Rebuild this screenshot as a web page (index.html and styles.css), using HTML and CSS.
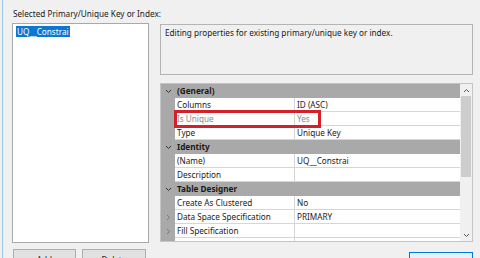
FILE: index.html
```html
<!DOCTYPE html>
<html>
<head>
<meta charset="utf-8">
<link rel="stylesheet" href="styles.css">
</head>
<body>
<div class="window">
  <div class="label">Selected Primary/Unique Key or Index:</div>
  <div class="main">
    <div class="left">
      <div class="list">
        <span class="sel">UQ__Constrai</span>
      </div>
      <div class="btns">
        <div class="btn add">Add</div>
        <div class="btn del">Delete</div>
      </div>
    </div>
    <div class="right">
      <div class="desc">Editing properties for existing primary/unique key or index.</div>
      <div class="grid">
        <div class="rows">
          <div class="row cat"><div class="mg"><svg width="7" height="5" viewBox="0 0 7 5"><path d="M1 1 L3.5 3.5 L6 1" fill="none" stroke="#333" stroke-width="1"/></svg></div><div class="cname">(General)</div></div>
          <div class="row prop"><div class="mg"></div><div class="name">Columns</div><div class="val">ID (ASC)</div></div>
          <div class="row prop ro"><div class="mg"></div><div class="name">Is Unique</div><div class="val">Yes</div></div>
          <div class="row prop"><div class="mg"></div><div class="name">Type</div><div class="val">Unique Key</div></div>
          <div class="row cat"><div class="mg"><svg width="7" height="5" viewBox="0 0 7 5"><path d="M1 1 L3.5 3.5 L6 1" fill="none" stroke="#333" stroke-width="1"/></svg></div><div class="cname">Identity</div></div>
          <div class="row prop"><div class="mg"></div><div class="name">(Name)</div><div class="val">UQ__Constrai</div></div>
          <div class="row prop"><div class="mg"></div><div class="name">Description</div><div class="val"></div></div>
          <div class="row cat"><div class="mg"><svg width="7" height="5" viewBox="0 0 7 5"><path d="M1 1 L3.5 3.5 L6 1" fill="none" stroke="#333" stroke-width="1"/></svg></div><div class="cname">Table Designer</div></div>
          <div class="row prop"><div class="mg"></div><div class="name">Create As Clustered</div><div class="val">No</div></div>
          <div class="row prop"><div class="mg"><svg width="5" height="7" viewBox="0 0 5 7"><path d="M1 1 L3.5 3.5 L1 6" fill="none" stroke="#777" stroke-width="1"/></svg></div><div class="name">Data Space Specification</div><div class="val">PRIMARY</div></div>
          <div class="row prop"><div class="mg"><svg width="5" height="7" viewBox="0 0 5 7"><path d="M1 1 L3.5 3.5 L1 6" fill="none" stroke="#777" stroke-width="1"/></svg></div><div class="name">Fill Specification</div><div class="val"></div></div>
          <div class="row prop"><div class="mg"></div><div class="name"></div><div class="val"></div></div>
        </div>
        <div class="sbar">
          <div class="arrow"><svg width="7" height="5" viewBox="0 0 7 5"><path d="M1 4 L3.5 1.5 L6 4" fill="none" stroke="#555" stroke-width="1"/></svg></div>
          <div class="track"><div class="thumb"></div></div>
          <div class="arrow"><svg width="7" height="5" viewBox="0 0 7 5"><path d="M1 1 L3.5 3.5 L6 1" fill="none" stroke="#555" stroke-width="1"/></svg></div>
        </div>
        <div class="hl"></div>
      </div>
      <div class="okrow"><div class="btn ok"></div></div>
    </div>
  </div>
</div>
</body>
</html>
```
FILE: styles.css
```css
html, body { margin: 0; padding: 0; }
body {
  width: 480px; height: 258px; overflow: hidden;
  background: #f0f0f0;
  font-family: "Noto Sans", "Open Sans", sans-serif;
  font-size: 8.2px;
  color: #1a1a1a;
}
.window {
  height: 258px;
  margin-left: 2px;
  border-left: 1px solid #9cc9ec;
  box-sizing: border-box;
  padding-left: 9px;
}
.label {
  height: 12px; line-height: 12px;
  padding-top: 8px;
  padding-left: 1px;
  margin-bottom: 3px;
}
.main { display: flex; gap: 11px; }
.left { width: 137px; display: flex; flex-direction: column; }
.list {
  height: 220px; box-sizing: border-box;
  background: #fff; border: 1px solid #a9a9a9;
  padding: 2px 3px;
}
.sel {
  display: inline-block;
  background: #0a78d4; color: #fff;
  line-height: 11px; padding: 0 1px;
}
.btns { display: flex; gap: 6px; margin-top: 6px; padding-left: 1px; }
.btn {
  height: 22px; box-sizing: border-box;
  background: #e1e1e1; border: 1px solid #adadad;
  text-align: center; line-height: 20px;
}
.add { width: 63px; }
.del { width: 64px; }
.right { width: 313px; display: flex; flex-direction: column; }
.desc {
  margin-top: 1px;
  height: 51px; box-sizing: border-box;
  border: 1px solid #b4b4b4; background: #f0f0f0;
  padding: 2px 4px;
  line-height: 12px;
}
.grid {
  position: relative;
  margin-top: 8px;
  height: 159px; box-sizing: border-box;
  border: 1px solid #c4c4c4;
  display: flex; background: #fff; overflow: hidden;
}
.rows { flex: 1; }
.row { display: flex; height: 14px; line-height: 13px; }
.mg {
  width: 14px; flex: none; background: #a9a9a9;
  display: flex; align-items: center; justify-content: center;
}
.cat { background: #a9a9a9; }
.cname { font-weight: bold; padding-left: 2px; }
.name {
  width: 117px; flex: none;
  border-right: 1px solid #d6d6d6; border-bottom: 1px solid #d6d6d6;
  padding-left: 2px;
  white-space: nowrap; overflow: hidden;
}
.val {
  flex: 1; border-bottom: 1px solid #d6d6d6; padding-left: 2px;
  white-space: nowrap; overflow: hidden;
}
.ro .name, .ro .val { color: #8c8c8c; }
.sbar {
  width: 12px; flex: none; background: #f0f0f0;
  display: flex; flex-direction: column;
}
.arrow { height: 12px; display: flex; align-items: center; justify-content: center; }
.track { flex: 1; }
.thumb { height: 81px; background: #cdcdcd; margin: 0 1px 0 1px; }
.hl {
  position: absolute;
  left: 13px; top: 26px;
  width: 147px; height: 18px;
  box-sizing: border-box;
  border: 3px solid #d42029;
}
.okrow { display: flex; justify-content: flex-end; margin-top: 10px; }
.ok {
  width: 64px; background: #e5f1fb; border: 1px solid #0078d7;
}
```
